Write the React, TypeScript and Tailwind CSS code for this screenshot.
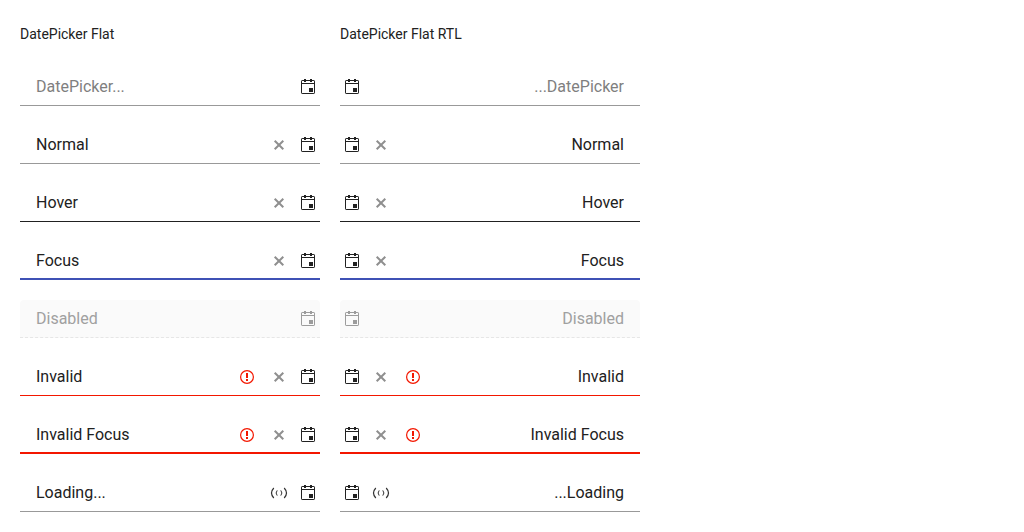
import React from 'react';

type State = 'empty' | 'normal' | 'hover' | 'focus' | 'disabled' | 'invalid' | 'invalidFocus' | 'loading';

interface Field {
  state: State;
  value?: string;
}

const FIELDS: Field[] = [
  { state: 'empty' },
  { state: 'normal', value: 'Normal' },
  { state: 'hover', value: 'Hover' },
  { state: 'focus', value: 'Focus' },
  { state: 'disabled', value: 'Disabled' },
  { state: 'invalid', value: 'Invalid' },
  { state: 'invalidFocus', value: 'Invalid Focus' },
  { state: 'loading', value: 'Loading...' },
];

const LINES: Record<State, string> = {
  empty: 'after:h-px after:bg-[#999999]',
  normal: 'after:h-px after:bg-[#999999]',
  hover: 'after:h-px after:bg-[#212121]',
  focus: 'after:h-0.5 after:bg-[#3f51b5]',
  disabled: 'rounded-t bg-[#fafafa] after:border-b after:border-dashed after:border-[#e6e6e6]',
  invalid: 'after:h-px after:bg-[#f31700]',
  invalidFocus: 'after:h-0.5 after:bg-[#f31700]',
  loading: 'after:h-px after:bg-[#999999]',
};

function CalendarIcon() {
  return (
    <svg width="16" height="16" viewBox="0 0 16 16" fill="none" aria-hidden="true">
      <rect x="1.5" y="1.5" width="13" height="13" rx="0.6" stroke="currentColor" />
      <path d="M2 4h12v1H2zM4 0h2v3H4zM10 0h2v3h-2zM9 9h4v4H9z" fill="currentColor" />
    </svg>
  );
}

function ClearIcon() {
  return (
    <svg width="16" height="16" viewBox="0 0 16 16" aria-hidden="true">
      <path d="M3.7 3.7l8.6 8.6M12.3 3.7l-8.6 8.6" stroke="currentColor" strokeWidth="2" />
    </svg>
  );
}

function ErrorIcon() {
  return (
    <svg width="16" height="16" viewBox="0 0 16 16" fill="none" role="img" aria-label="Invalid value">
      <circle cx="8" cy="8" r="6.4" stroke="currentColor" strokeWidth="1.2" />
      <path d="M7 4h2v5H7zM7 10h2v2H7z" fill="currentColor" />
    </svg>
  );
}

function LoadingIcon() {
  return (
    <svg width="18" height="16" viewBox="0 0 18 16" fill="none" role="img" aria-label="Loading">
      <path d="M3.8 3Q-0.8 8 3.8 13M14.2 3Q18.8 8 14.2 13" stroke="currentColor" strokeWidth="1.2" />
      <path d="M7.2 5.4Q5 8 7.2 10.6M10.8 5.4Q13 8 10.8 10.6" stroke="currentColor" strokeWidth="1" />
    </svg>
  );
}

function DatePicker({ state, value }: Field) {
  const disabled = state === 'disabled';
  const invalid = state === 'invalid' || state === 'invalidFocus';
  const clearable = invalid || state === 'normal' || state === 'hover' || state === 'focus';
  const label = value ?? 'DatePicker';

  return (
    <div
      className={`relative flex h-[38px] items-center after:pointer-events-none after:absolute after:inset-x-0 after:bottom-0 after:content-[''] ${LINES[state]}`}
    >
      <input
        type="text"
        aria-label={label}
        aria-invalid={invalid}
        disabled={disabled}
        defaultValue={value}
        placeholder="DatePicker..."
        className="h-full min-w-0 flex-1 bg-transparent ps-4 pb-0.5 text-base text-[#212121] outline-none placeholder:text-[#7f7f7f] disabled:text-[#a0a0a0]"
      />
      <div className="flex h-full items-center pe-px">
        {invalid && (
          <span className="flex w-8 justify-center text-[#f31700]">
            <ErrorIcon />
          </span>
        )}
        {clearable && (
          <button type="button" aria-label={`Clear ${label}`} className="flex h-full w-8 items-center justify-center text-[#8f8f8f]">
            <ClearIcon />
          </button>
        )}
        {state === 'loading' && (
          <span className="flex w-8 justify-center text-[#333333]">
            <LoadingIcon />
          </span>
        )}
      </div>
      <button
        type="button"
        aria-label={`Open calendar for ${label}`}
        disabled={disabled}
        className={`flex h-full w-6 items-center justify-center ${disabled ? 'text-[#9c9c9c]' : 'text-[#212121]'}`}
      >
        <CalendarIcon />
      </button>
    </div>
  );
}

function Column({ title, rtl = false }: { title: string; rtl?: boolean }) {
  return (
    <section className="flex w-[300px] flex-col gap-5">
      <h2 className="text-sm leading-7">{title}</h2>
      <div dir={rtl ? 'rtl' : 'ltr'} className="flex flex-col gap-5">
        {FIELDS.map((field) => (
          <DatePicker key={field.state} {...field} />
        ))}
      </div>
    </section>
  );
}

export default function App() {
  return (
    <main className="flex flex-wrap gap-5 bg-white p-5 font-[Roboto,sans-serif] text-[#212121]">
      <Column title="DatePicker Flat" />
      <Column title="DatePicker Flat RTL" rtl />
    </main>
  );
}
